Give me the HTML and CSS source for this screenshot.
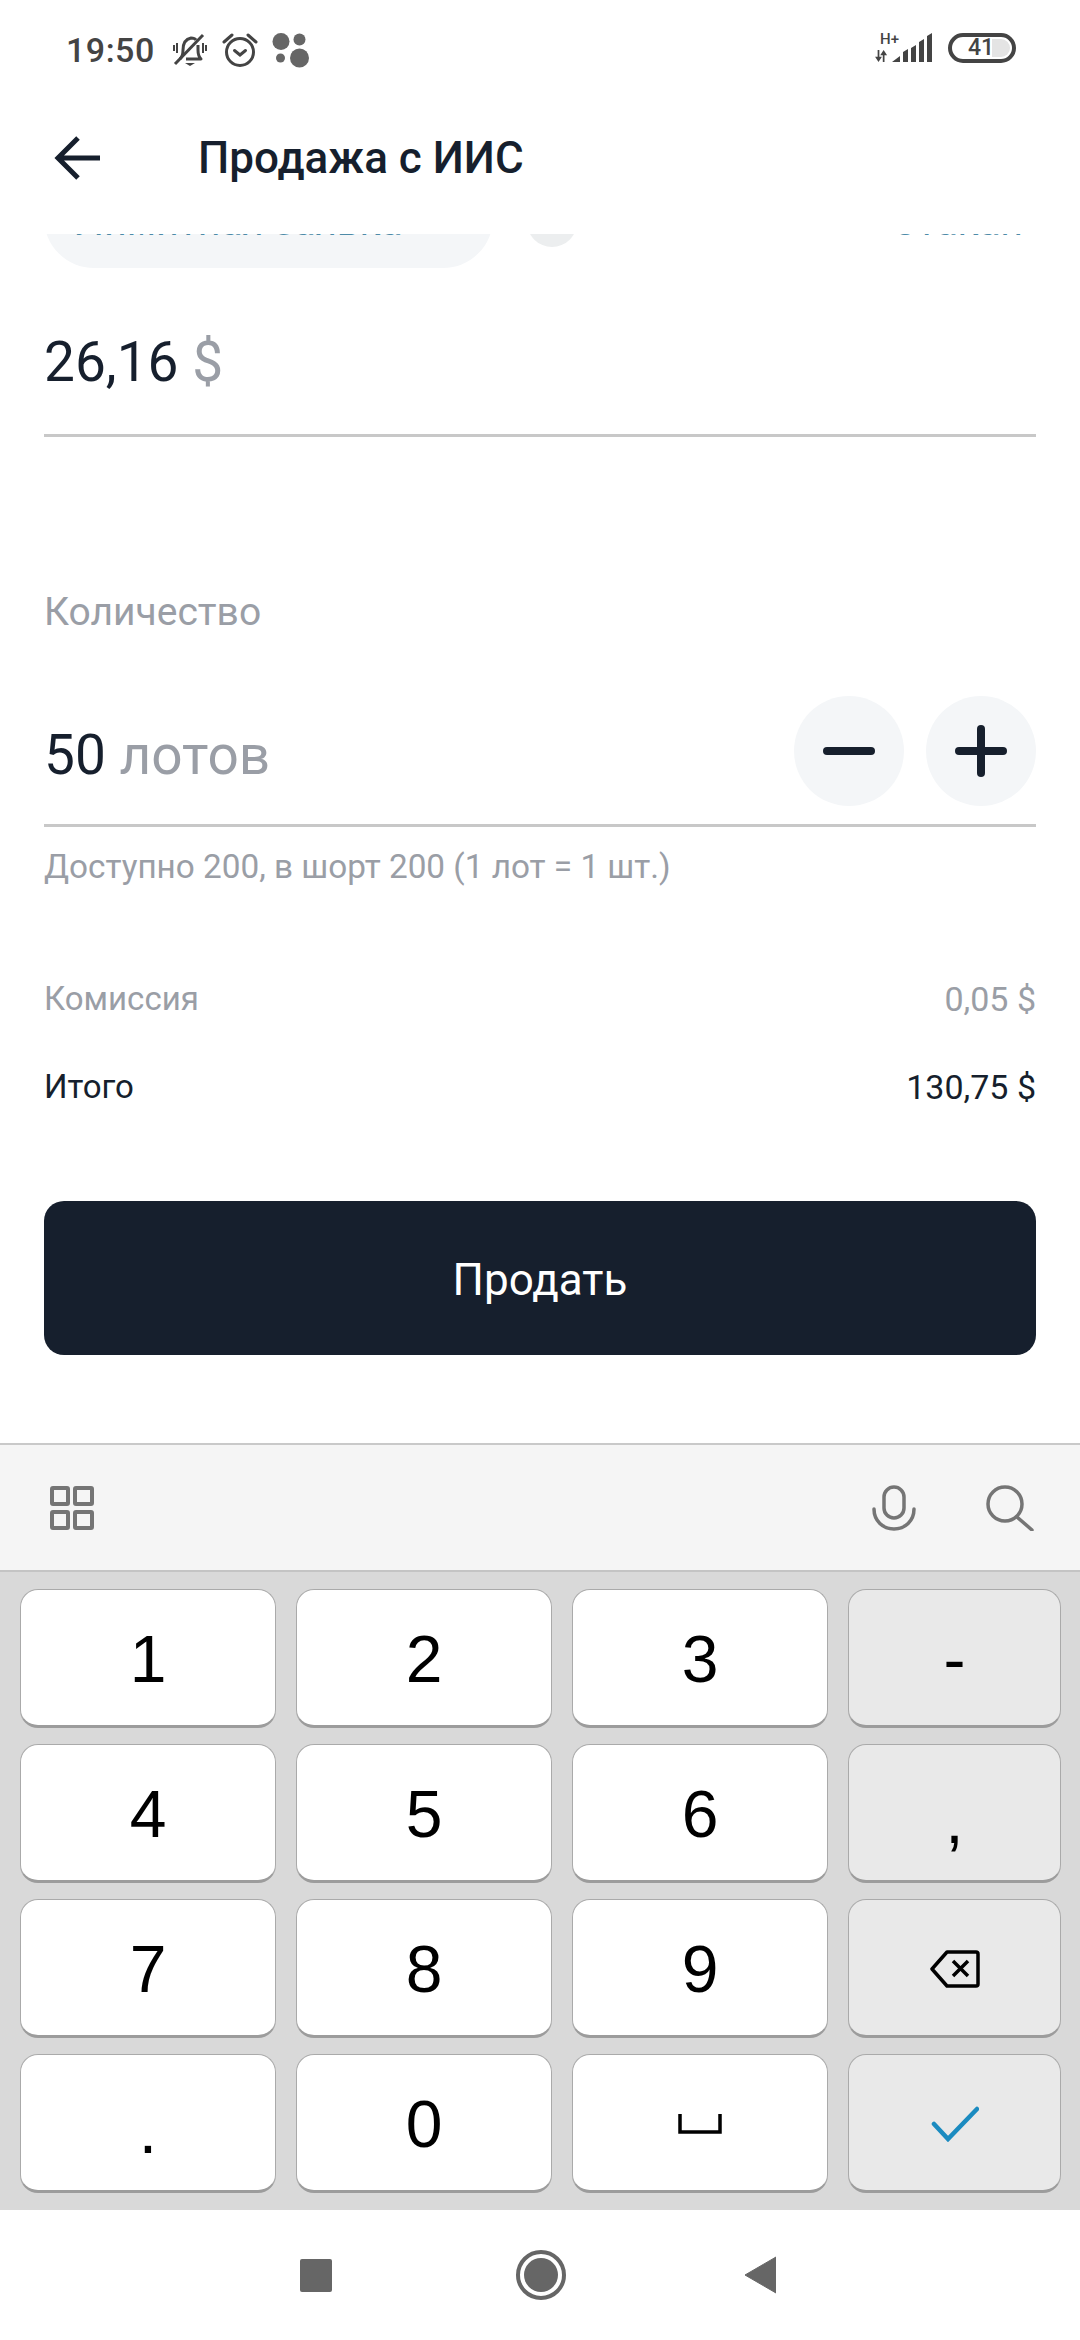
FILE: index.html
```html
<!DOCTYPE html>
<html lang="ru">
<head>
    <meta charset="UTF-8">
    <meta name="viewport" content="width=device-width, initial-scale=1.0">
    <title>Продажа с ИИС</title>
    <link rel="stylesheet" href="styles.css">
</head>
<body>
    <div class="status-bar">
        <div class="status-left">
            <span class="clock">19:50</span>
            <svg class="status-icon" width="36" height="36" viewBox="0 0 36 36" fill="none" stroke="#444" stroke-width="3">
                <path d="M8 27c2-2 3-4 3-9 0-7 3-11 8-12 2 0 4 .5 5 2M26 13v5c0 4 1 7 3 9H14" stroke-linejoin="round"/>
                <path d="M13 31h10l-5 3z" fill="#444" stroke="none"/>
                <path d="M3 32L31 3"/>
                <path d="M5 11v10M2 13v6M31 11v10M34 13v6" stroke-width="2"/>
            </svg>
            <svg class="status-icon" width="36" height="36" viewBox="0 0 36 36" fill="none" stroke="#444" stroke-width="3">
                <circle cx="18" cy="20" r="13.500"/>
                <path d="M12.500 18.500l5.500 4.500 5.500-4.500" stroke-linecap="round"/>
                <path d="M2 10l8-7M34 10l-8-7" stroke-linecap="round"/>
            </svg>
            <svg class="status-icon" width="38" height="36" viewBox="0 0 38 36" fill="#666">
                <circle cx="9" cy="9.500" r="8.500"/>
                <circle cx="27.500" cy="7.500" r="6"/>
                <circle cx="8.500" cy="26" r="4.500"/>
                <circle cx="27.500" cy="26" r="9.500"/>
            </svg>
        </div>
        <div class="status-right">
            <div class="network">
                <span class="network-type">H+</span>
                <svg class="network-arrows" width="13" height="12" viewBox="0 0 15 14" fill="#444">
                    <path d="M3 0h2v8h3l-4 6-4-6h3zM11 14h-2v-8h-3l4-6 4 6h-3z"/>
                </svg>
            </div>
            <svg class="signal" width="42" height="30" viewBox="0 0 42 30" fill="#444">
                <path d="M2 29l8-6v6zM13 19l5-3v13h-5zM21 15l5-3v17h-5zM29 9l5-3v23h-5zM37 3l5-3v29h-5z"/>
            </svg>
            <div class="battery">
                <div class="battery-empty"></div>
                <span class="battery-level">41</span>
            </div>
        </div>
    </div>

    <header class="app-bar">
        <svg class="back" width="46" height="46" viewBox="0 0 46 46" fill="none" stroke="#161f2d" stroke-width="5">
            <path d="M46 23H4M24 3L4 23l20 20"/>
        </svg>
        <h1 class="title">Продажа с ИИС</h1>
    </header>

    <main class="order">
        <div class="order-type">
            <div class="chip">Лимитная заявка</div>
            <div class="help-dot"></div>
            <div class="book-link">Стакан</div>
        </div>

        <div class="field price-field">
            <span class="value">26,16</span> <span class="unit">$</span>
        </div>

        <div class="label">Количество</div>
        <div class="field qty-field">
            <div class="qty-value"><span class="value">50</span> <span class="unit">лотов</span></div>
            <div class="stepper">
                <div class="step">
                    <svg width="52" height="52" viewBox="0 0 52 52" fill="#161f2d"><rect y="22" width="52" height="8" rx="4"/></svg>
                </div>
                <div class="step">
                    <svg width="52" height="52" viewBox="0 0 52 52" fill="#161f2d"><rect y="22" width="52" height="8" rx="4"/><rect x="22" width="8" height="52" rx="4"/></svg>
                </div>
            </div>
        </div>
        <div class="hint">Доступно 200, в шорт 200 (1 лот = 1 шт.)</div>

        <div class="summary-row muted">
            <span class="summary-name">Комиссия</span>
            <span>0,05 $</span>
        </div>
        <div class="summary-row total">
            <span class="summary-name">Итого</span>
            <span>130,75 $</span>
        </div>

        <button class="sell">Продать</button>
    </main>

    <section class="keyboard">
        <div class="kb-toolbar">
            <svg width="44" height="44" viewBox="0 0 44 44" fill="none" stroke="#757575" stroke-width="4">
                <rect x="2" y="2" width="16" height="16" rx="1"/>
                <rect x="25" y="2" width="17" height="16" rx="1"/>
                <rect x="2" y="26" width="16" height="16" rx="1"/>
                <rect x="25" y="26" width="17" height="16" rx="1"/>
            </svg>
            <div class="kb-tools-right">
                <svg width="44" height="46" viewBox="0 0 44 46" fill="none" stroke="#757575" stroke-width="3.500" stroke-linecap="round">
                    <rect x="12" y="2" width="20" height="31" rx="10"/>
                    <path d="M2 24c0 12 9 20 20 20s20-8 20-20"/>
                </svg>
                <svg width="48" height="46" viewBox="0 0 48 46" fill="none" stroke="#757575" stroke-width="3.500" stroke-linecap="round">
                    <circle cx="19" cy="19" r="17"/>
                    <path d="M31 32l15 13"/>
                </svg>
            </div>
        </div>
        <div class="keys">
            <div class="key">1</div>
            <div class="key">2</div>
            <div class="key">3</div>
            <div class="key side">-</div>
            <div class="key">4</div>
            <div class="key">5</div>
            <div class="key">6</div>
            <div class="key side comma">,</div>
            <div class="key">7</div>
            <div class="key">8</div>
            <div class="key">9</div>
            <div class="key side">
                <svg width="50" height="38" viewBox="0 0 50 38" fill="none" stroke="#000" stroke-width="3.500" stroke-linejoin="round">
                    <path d="M17 2h29a2 2 0 0 1 2 2v30a2 2 0 0 1-2 2H17L2 19z"/>
                    <path d="M23 11l15 15M38 11L23 26"/>
                </svg>
            </div>
            <div class="key dot">.</div>
            <div class="key">0</div>
            <div class="key">
                <svg width="44" height="20" viewBox="0 0 44 20" fill="none" stroke="#000" stroke-width="3.500">
                    <path d="M2 0v18h40V0"/>
                </svg>
            </div>
            <div class="key side">
                <svg width="48" height="36" viewBox="0 0 48 36" fill="none" stroke="#1b8bc0" stroke-width="4.500" stroke-linecap="round">
                    <path d="M3 18l14 15L46 3"/>
                </svg>
            </div>
        </div>
    </section>

    <nav class="nav-bar">
        <div class="nav-square"></div>
        <div class="nav-home"><div class="nav-home-inner"></div></div>
        <svg width="32" height="38" viewBox="0 0 32 38" fill="#666"><path d="M32 1v36L1 19z" stroke="#666" stroke-width="1" stroke-linejoin="round"/></svg>
    </nav>
</body>
</html>
```

FILE: styles.css
```css
* {
    box-sizing: border-box;
}

body {
    margin: 0;
    width: 1080px;
    height: 2340px;
    display: flex;
    flex-direction: column;
    background: white;
    font-family: Roboto, "Noto Sans", sans-serif;
    overflow: hidden;
}

/* status bar */

.status-bar {
    height: 100px;
    padding: 30px 64px 0 66px;
    display: flex;
    justify-content: space-between;
    align-items: flex-start;
    color: #444;
}

.status-left {
    display: flex;
    align-items: center;
    gap: 14px;
    height: 40px;
}

.clock {
    font-size: 34px;
    font-weight: 500;
    line-height: 40px;
    margin-right: 3px;
    letter-spacing: 0.5px;
}

.status-right {
    display: flex;
    align-items: flex-end;
    padding-top: 3px;
}

.network {
    width: 17px;
    height: 30px;
    position: relative;
}

.network-type {
    position: absolute;
    left: 7px;
    top: -3px;
    font-size: 15px;
    font-weight: 500;
    line-height: 18px;
}

.network-arrows {
    position: absolute;
    left: 2px;
    bottom: 1px;
}

.signal {
    display: block;
}

.battery {
    width: 68px;
    height: 30px;
    margin-left: 16px;
    border: 4px solid #444;
    border-radius: 15px;
    position: relative;
    display: flex;
    align-items: center;
    justify-content: center;
    overflow: hidden;
}

.battery-empty {
    position: absolute;
    top: 2px;
    bottom: 2px;
    right: 2px;
    width: 18px;
    background: #e4e4e4;
    border-radius: 0 10px 10px 0;
}

.battery-level {
    position: relative;
    font-size: 23px;
    font-weight: 500;
    line-height: 22px;
    margin-right: 2px;
}

/* app bar */

.app-bar {
    height: 134px;
    padding: 0 0 18px 54px;
    display: flex;
    align-items: center;
    background: white;
}

.title {
    margin: 0 0 0 98px;
    font-size: 44px;
    font-weight: 500;
    color: #161f2d;
}

/* order form */

.order {
    height: 1209px;
    padding: 0 44px;
    overflow: hidden;
    display: flex;
    flex-direction: column;
}

.order-type {
    height: 100px;
    margin-top: -66px;
    flex-shrink: 0;
    display: flex;
    align-items: flex-start;
}

.chip {
    width: 449px;
    height: 100px;
    padding: 32px 0 0 32px;
    background: #f4f6f8;
    border-radius: 50px;
    font-size: 39.5px;
    line-height: 44px;
    color: #4d8ba8;
}

.help-dot {
    width: 50px;
    height: 50px;
    margin: 29px 0 0 34px;
    border-radius: 50%;
    background: #eceeef;
}

.book-link {
    margin-left: auto;
    padding: 32px 13px 0 0;
    font-size: 39.5px;
    line-height: 44px;
    color: #4d8ba8;
}

.field {
    border-bottom: 3px solid #c8c8c8;
    flex-shrink: 0;
}

.value {
    color: #161f2d;
}

.unit {
    color: #9a9ea6;
}

.price-field {
    margin-top: 62px;
    padding-bottom: 40px;
    font-size: 55px;
    line-height: 64px;
}

.label {
    margin-top: 153px;
    font-size: 39px;
    line-height: 44px;
    color: #9a9ea6;
}

.qty-field {
    margin-top: 62px;
    padding-bottom: 18px;
    display: flex;
    justify-content: space-between;
    align-items: center;
    font-size: 55px;
    line-height: 64px;
}

.qty-value {
    padding-top: 8px;
}

.stepper {
    display: flex;
    gap: 22px;
}

.step {
    width: 110px;
    height: 110px;
    border-radius: 50%;
    background: #f4f6f8;
    display: flex;
    align-items: center;
    justify-content: center;
}

.hint {
    margin-top: 18px;
    font-size: 33.3px;
    line-height: 44px;
    color: #9a9ea6;
}

.summary-row {
    display: flex;
    justify-content: space-between;
    font-size: 34px;
    line-height: 44px;
}

.summary-name {
    font-size: 33px;
}

.muted {
    margin-top: 88px;
    color: #9a9ea6;
}

.total {
    margin-top: 44px;
    color: #161f2d;
}

.sell {
    margin-top: 92px;
    height: 154px;
    padding-top: 5px;
    flex-shrink: 0;
    border: none;
    border-radius: 20px;
    background: #161f2d;
    color: white;
    font-family: inherit;
    font-size: 44px;
}

/* keyboard */

.keyboard {
    height: 767px;
    background: #d9d9d9;
    border-top: 2px solid #c9c9c9;
}

.kb-toolbar {
    height: 127px;
    padding: 0 46px 0 50px;
    background: #f5f5f5;
    border-bottom: 2px solid #c4c4c4;
    display: flex;
    justify-content: space-between;
    align-items: center;
}

.kb-tools-right {
    display: flex;
    gap: 70px;
}

.keys {
    padding: 17px 20px 0;
    display: grid;
    grid-template-columns: 256px 256px 256px 213px;
    grid-auto-rows: 139px;
    column-gap: 20px;
    row-gap: 16px;
}

.key {
    padding-top: 3px;
    display: flex;
    align-items: center;
    justify-content: center;
    background: white;
    border: 1px solid #aaa;
    border-bottom: 3px solid #9c9c9c;
    border-radius: 18px;
    font-family: "Liberation Sans", Arial, sans-serif;
    font-size: 66px;
    color: black;
}

.side {
    background: #e9e9e9;
}

.comma {
    align-items: flex-end;
    padding-bottom: 22px;
}

.dot {
    align-items: flex-end;
    padding-bottom: 22px;
}

/* system nav */

.nav-bar {
    flex: 1;
    padding: 0 304px 0 300px;
    display: flex;
    justify-content: space-between;
    align-items: center;
    background: white;
}

.nav-square {
    width: 32px;
    height: 33px;
    background: #666;
    border-radius: 2px;
}

.nav-home {
    width: 50px;
    height: 50px;
    margin-left: 6px;
    border: 4px solid #666;
    border-radius: 50%;
    display: flex;
    align-items: center;
    justify-content: center;
}

.nav-home-inner {
    width: 34px;
    height: 34px;
    background: #666;
    border-radius: 50%;
}
```
